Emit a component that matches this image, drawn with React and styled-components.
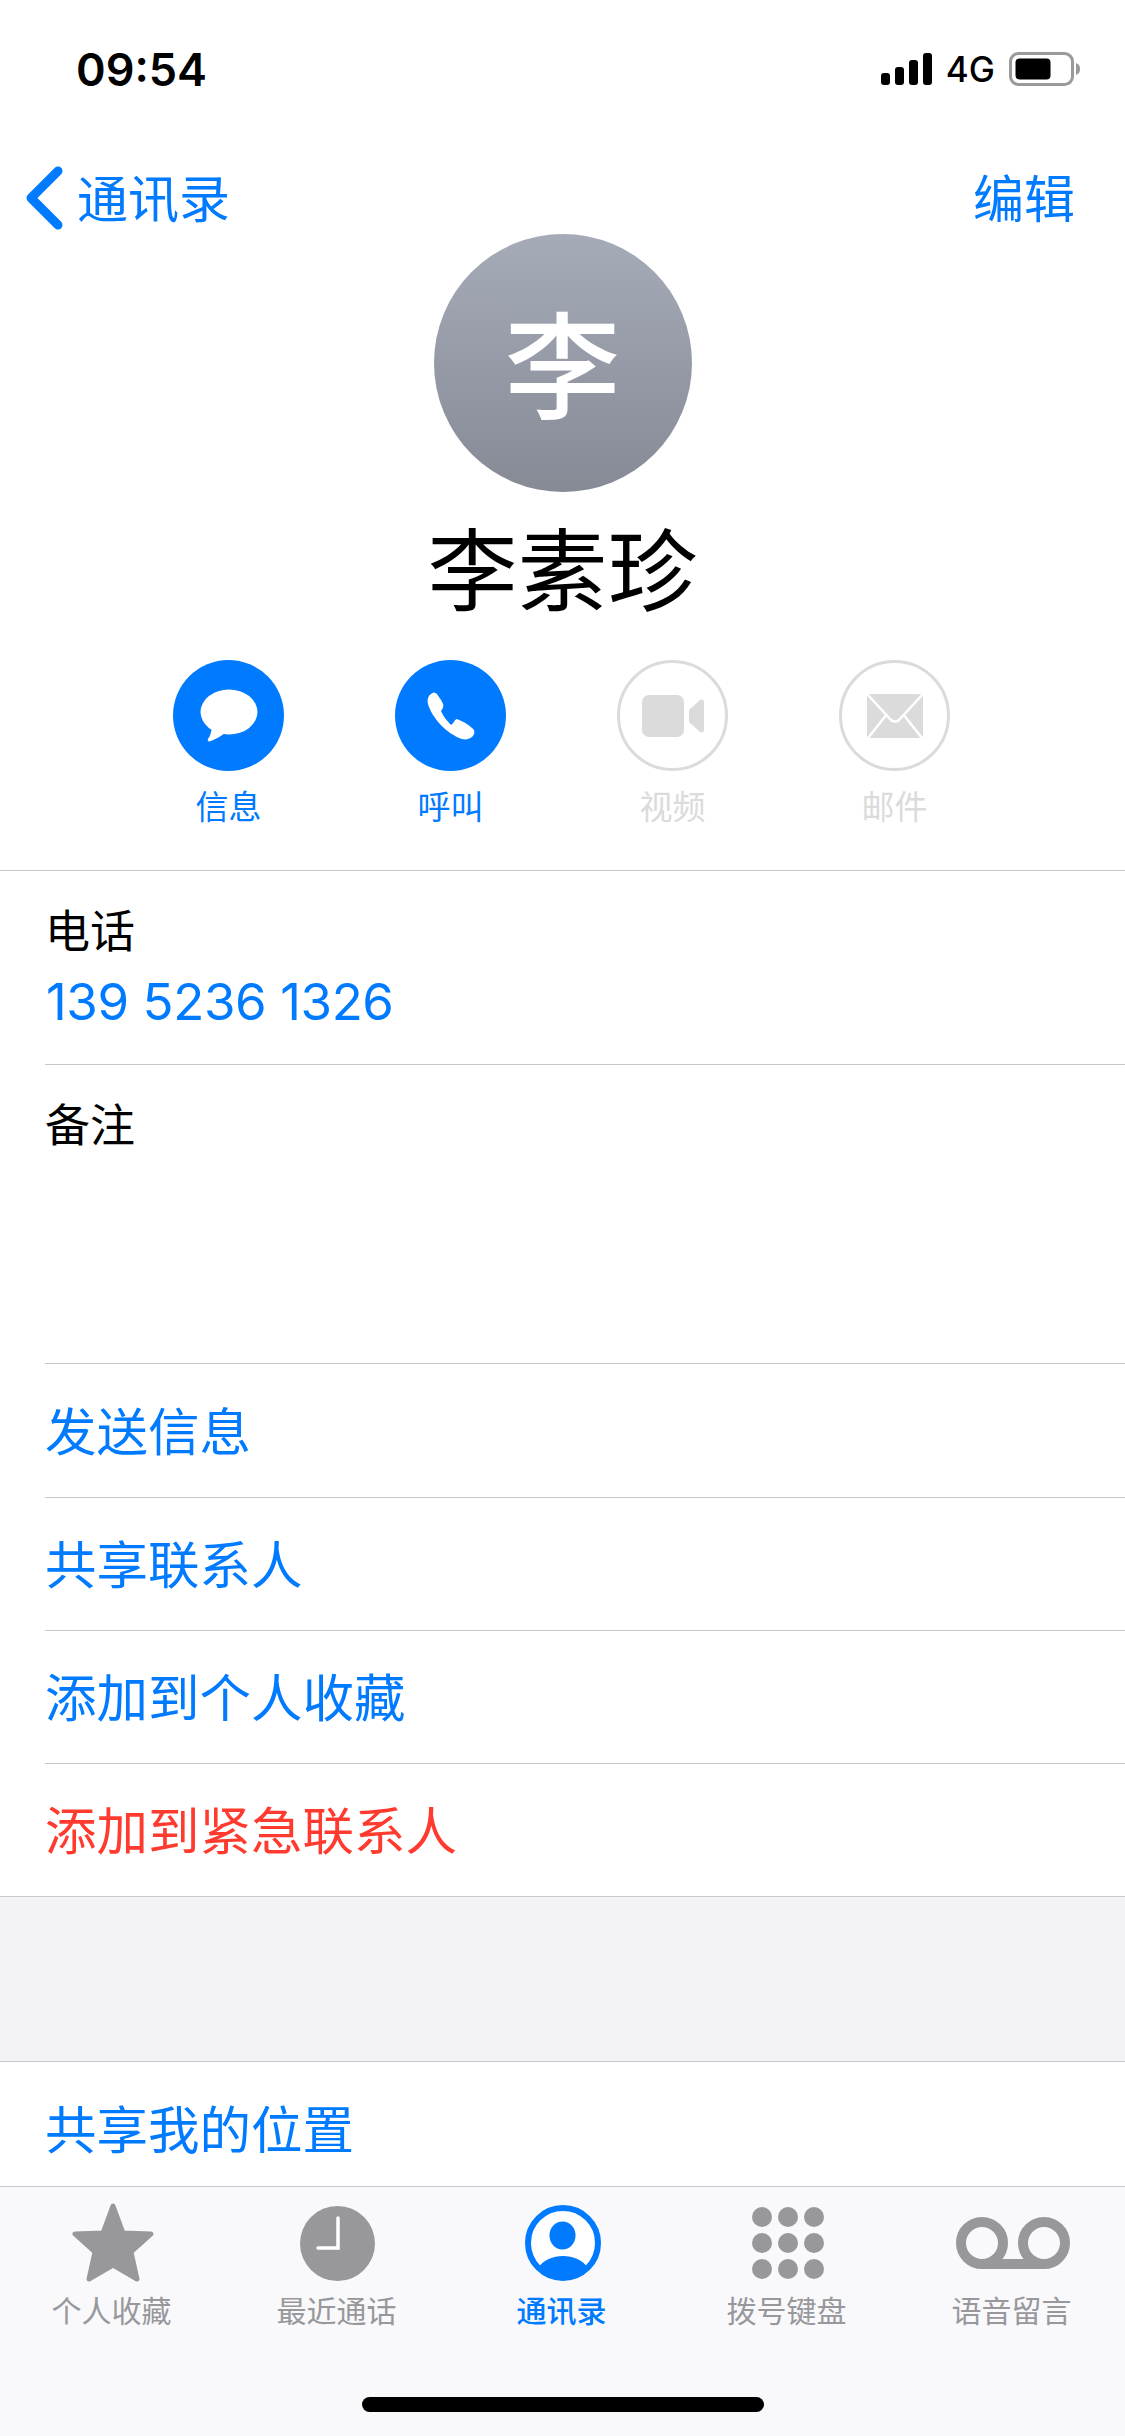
import React from 'react';
import styled, { createGlobalStyle } from 'styled-components';

const BLUE = '#007aff';
const RED = '#ff3b30';
const DISABLED = '#dbdbdb';
const TAB_GRAY = '#98989c';
const LINE = '#c8c7cc';
const CJK = '"Noto Sans CJK SC", "Liberation Sans", sans-serif';

const GlobalStyle = createGlobalStyle`
    html, body {
        margin: 0;
        padding: 0;
        background: #fff;
    }
    * {
        box-sizing: border-box;
    }
`

const Page = styled.div`
    width: 1125px;
    height: 2436px;
    display: flex;
    flex-direction: column;
    overflow: hidden;
    background: #fff;
    font-family: ${CJK};
`

const Main = styled.div`
    flex: 1;
    min-height: 0;
    overflow: hidden;
`

const StatusBar = styled.div`
    height: 138px;
    display: flex;
    align-items: center;
    justify-content: space-between;
    padding: 0 44px 0 76px;
`

const Time = styled.span`
    font-family: Inter, sans-serif;
    font-size: 45px;
    font-weight: 600;
    color: #000;
`

const StatusRight = styled.div`
    display: flex;
    align-items: center;
`

const Network = styled.span`
    font-family: Inter, sans-serif;
    font-size: 35px;
    font-weight: 500;
    color: #000;
    margin: 0 14px 0 13px;
`

const Nav = styled.div`
    height: 96px;
    padding: 24px 50px 0 25px;
    display: flex;
    align-items: center;
    justify-content: space-between;
`

const NavBack = styled.div`
    display: flex;
    align-items: center;
    gap: 14px;
`

const NavText = styled.span`
    font-size: 51px;
    line-height: 72px;
    padding-bottom: 5px;
    color: ${BLUE};
`

const Header = styled.div`
    height: 637px;
    display: flex;
    flex-direction: column;
    align-items: center;
    border-bottom: 1px solid ${LINE};
`

const Avatar = styled.div`
    width: 258px;
    height: 258px;
    padding-bottom: 8px;
    border-radius: 50%;
    display: flex;
    align-items: center;
    justify-content: center;
    background: linear-gradient(#a6abb8, #858a95);
    color: #fff;
    font-size: 116px;
    font-weight: 500;
    line-height: 1;
`

const Name = styled.div`
    margin-top: 23px;
    font-size: 90px;
    line-height: 100px;
    color: #000;
`

const Actions = styled.div`
    margin: 45px 2px 0 0;
    display: grid;
    grid-template-columns: repeat(4, 222px);
`

const Action = styled.div`
    display: flex;
    flex-direction: column;
    align-items: center;
`

const ActionCircle = styled.div`
    width: 111px;
    height: 111px;
    border-radius: 50%;
    display: flex;
    align-items: center;
    justify-content: center;
    background: ${props => props.$off ? '#fff' : BLUE};
    border: ${props => props.$off ? `3px solid ${DISABLED}` : 'none'};
`

const ActionLabel = styled.span`
    margin-top: 14px;
    font-size: 33px;
    line-height: 40px;
    color: ${props => props.$off ? DISABLED : BLUE};
`

const InfoRow = styled.div`
    margin-left: 45px;
    height: ${props => props.$height}px;
    padding-top: 30px;
    border-bottom: 1px solid ${LINE};
`

const InfoLabel = styled.div`
    font-size: 45px;
    line-height: 56px;
    color: #000;
`

const InfoValue = styled.div`
    margin: 13px 0 0 1px;
    font-family: Inter, sans-serif;
    font-size: 51px;
    letter-spacing: -0.4px;
    line-height: 64px;
    color: ${BLUE};
`

const LinkRow = styled.div`
    margin-left: ${props => props.$full ? 0 : 45}px;
    padding-left: ${props => props.$full ? 45 : 0}px;
    padding-bottom: 5px;
    height: ${props => props.$height}px;
    display: flex;
    align-items: center;
    border-bottom: 1px solid ${props => props.$noLine ? 'transparent' : LINE};
    font-size: 51.5px;
    color: ${props => props.$danger ? RED : BLUE};
`

const Gap = styled.div`
    height: 165px;
    background: #f2f2f7;
    border-bottom: 1px solid ${LINE};
`

const TabBar = styled.div`
    flex: none;
    height: 250px;
    padding-top: 16px;
    display: flex;
    flex-direction: column;
    background: #f9f9fb;
    border-top: 1px solid ${LINE};
`

const Tabs = styled.div`
    display: grid;
    grid-template-columns: repeat(5, 1fr);
`

const Tab = styled.div`
    display: flex;
    flex-direction: column;
    align-items: center;
`

const TabIcon = styled.div`
    height: 80px;
    display: flex;
    align-items: center;
    justify-content: center;
`

const TabLabel = styled.span`
    margin: 8px 2px 0 0;
    font-size: 30px;
    line-height: 36px;
    font-weight: ${props => props.$active ? 500 : 400};
    color: ${props => props.$active ? BLUE : TAB_GRAY};
`

const HomeBar = styled.div`
    align-self: center;
    margin-top: 70px;
    width: 402px;
    height: 15px;
    border-radius: 8px;
    background: #000;
`

const SignalIcon = () => (
    <svg width="52" height="32" viewBox="0 0 52 32">
        <rect x="0" y="20" width="9" height="12" rx="3" fill="#000" />
        <rect x="14" y="14" width="9" height="18" rx="3" fill="#000" />
        <rect x="28" y="7" width="9" height="25" rx="3" fill="#000" />
        <rect x="42" y="0" width="9" height="32" rx="3" fill="#000" />
    </svg>
)

const BatteryIcon = () => (
    <svg width="72" height="34" viewBox="0 0 72 34">
        <rect x="1.5" y="1.5" width="62" height="31" rx="8" fill="none" stroke="#9a9a9a" strokeWidth="3" />
        <rect x="6.5" y="6.5" width="35" height="21" rx="4" fill="#000" />
        <path d="M67 11 C70 12 71 14 71 17 C71 20 70 22 67 23 Z" fill="#9a9a9a" />
    </svg>
)

const BackIcon = () => (
    <svg width="38" height="64" viewBox="0 0 38 64">
        <path d="M33 5 L6 32 L33 59" fill="none" stroke={BLUE} strokeWidth="9" strokeLinecap="round" strokeLinejoin="round" />
    </svg>
)

const MessageIcon = () => (
    <svg width="58" height="54" viewBox="0 0 58 54">
        <ellipse cx="29" cy="23" rx="28.5" ry="22.5" fill="#fff" />
        <path d="M12 36 C12 42 10 47 8 50 C7 52 9 53 11 52 C16 50 21 47 25 44 Z" fill="#fff" />
    </svg>
)

const PhoneIcon = () => (
    <svg width="48" height="48" viewBox="0 0 48 48">
        <path d="M4 2 C6 0 8 0 10 2 C12 5 15 9 16 12 C17 14 16 16 14 19 C16 24 20 29 24 33 C27 31 28 27 30 27 C35 29 41 32 45 36 C48 38 48 41 46 44 C43 47 39 48 35 47 C20 42 5 26 1 12 C0 8 1 4 4 2 Z" fill="#fff" />
    </svg>
)

const VideoIcon = () => (
    <svg width="62" height="42" viewBox="0 0 62 42">
        <rect x="0" y="0" width="42" height="42" rx="7" fill={DISABLED} />
        <path d="M47 15 L58 5 C60 4 62 5 62 7 L62 35 C62 37 60 38 58 37 L47 27 Z" fill={DISABLED} />
    </svg>
)

const MailIcon = () => (
    <svg width="56" height="44" viewBox="0 0 56 44">
        <rect x="0" y="0" width="56" height="44" rx="2" fill={DISABLED} />
        <path d="M0 0 L24 26 C26 28 30 28 32 26 L56 0 M1 44 L20 20 M55 44 L36 20" fill="none" stroke="#fff" strokeWidth="2.5" />
    </svg>
)

const StarIcon = () => (
    <svg width="82" height="80" viewBox="-1 -1 82 80">
        <polygon
            points="40,2 50,29 78,30 58,48 64,75 40,61 16,75 22,48 2,30 30,29"
            fill={TAB_GRAY}
            stroke={TAB_GRAY}
            strokeWidth="5"
            strokeLinejoin="round"
        />
    </svg>
)

const ClockIcon = () => (
    <svg width="75" height="75" viewBox="0 0 75 75">
        <circle cx="37.5" cy="37.5" r="37.5" fill={TAB_GRAY} />
        <path d="M38 12 L38 42 L18 42" fill="none" stroke="#fff" strokeWidth="3.5" strokeLinecap="round" />
    </svg>
)

const ContactIcon = () => (
    <svg width="76" height="76" viewBox="0 0 76 76">
        <circle cx="38" cy="38" r="35" fill="#fff" stroke={BLUE} strokeWidth="6" />
        <ellipse cx="37.5" cy="30.5" rx="13" ry="14" fill={BLUE} />
        <path d="M13 63 C18 55 28 51 38 51 C48 51 58 55 63 63 C50 76 26 76 13 63 Z" fill={BLUE} />
    </svg>
)

const KeypadIcon = () => (
    <svg width="72" height="72" viewBox="0 0 72 72">
        {[10, 36, 62].map(cy => [10, 36, 62].map(cx => (
            <circle key={`${cx}-${cy}`} cx={cx} cy={cy} r="10" fill={TAB_GRAY} />
        )))}
    </svg>
)

const VoicemailIcon = () => (
    <svg width="114" height="52" viewBox="0 0 114 52">
        <circle cx="26" cy="26" r="21" fill="none" stroke={TAB_GRAY} strokeWidth="10" />
        <circle cx="88" cy="26" r="21" fill="none" stroke={TAB_GRAY} strokeWidth="10" />
        <path d="M26 47 L88 47" stroke={TAB_GRAY} strokeWidth="10" />
    </svg>
)

const actions = [
    { label: '信息', icon: <MessageIcon /> },
    { label: '呼叫', icon: <PhoneIcon /> },
    { label: '视频', icon: <VideoIcon />, off: true },
    { label: '邮件', icon: <MailIcon />, off: true },
]

const links = [
    { label: '发送信息', height: 134 },
    { label: '共享联系人', height: 133 },
    { label: '添加到个人收藏', height: 133 },
]

const tabs = [
    { label: '个人收藏', icon: <StarIcon /> },
    { label: '最近通话', icon: <ClockIcon /> },
    { label: '通讯录', icon: <ContactIcon />, active: true },
    { label: '拨号键盘', icon: <KeypadIcon /> },
    { label: '语音留言', icon: <VoicemailIcon /> },
]

const App = () => {
    return (
        <Page>
            <GlobalStyle />
            <Main>
                <StatusBar>
                    <Time>09:54</Time>
                    <StatusRight>
                        <SignalIcon />
                        <Network>4G</Network>
                        <BatteryIcon />
                    </StatusRight>
                </StatusBar>
                <Nav>
                    <NavBack>
                        <BackIcon />
                        <NavText>通讯录</NavText>
                    </NavBack>
                    <NavText>编辑</NavText>
                </Nav>
                <Header>
                    <Avatar>李</Avatar>
                    <Name>李素珍</Name>
                    <Actions>
                        {actions.map(a => (
                            <Action key={a.label}>
                                <ActionCircle $off={a.off}>{a.icon}</ActionCircle>
                                <ActionLabel $off={a.off}>{a.label}</ActionLabel>
                            </Action>
                        ))}
                    </Actions>
                </Header>
                <InfoRow $height={194}>
                    <InfoLabel>电话</InfoLabel>
                    <InfoValue>139 5236 1326</InfoValue>
                </InfoRow>
                <InfoRow $height={299}>
                    <InfoLabel>备注</InfoLabel>
                </InfoRow>
                {links.map(l => (
                    <LinkRow key={l.label} $height={l.height}>{l.label}</LinkRow>
                ))}
                <LinkRow $height={133} $danger $full>
                    添加到紧急联系人
                </LinkRow>
                <Gap />
                <LinkRow $height={134} $full $noLine>共享我的位置</LinkRow>
            </Main>
            <TabBar>
                <Tabs>
                    {tabs.map(t => (
                        <Tab key={t.label}>
                            <TabIcon>{t.icon}</TabIcon>
                            <TabLabel $active={t.active}>{t.label}</TabLabel>
                        </Tab>
                    ))}
                </Tabs>
                <HomeBar />
            </TabBar>
        </Page>
    )
}

export default App;
